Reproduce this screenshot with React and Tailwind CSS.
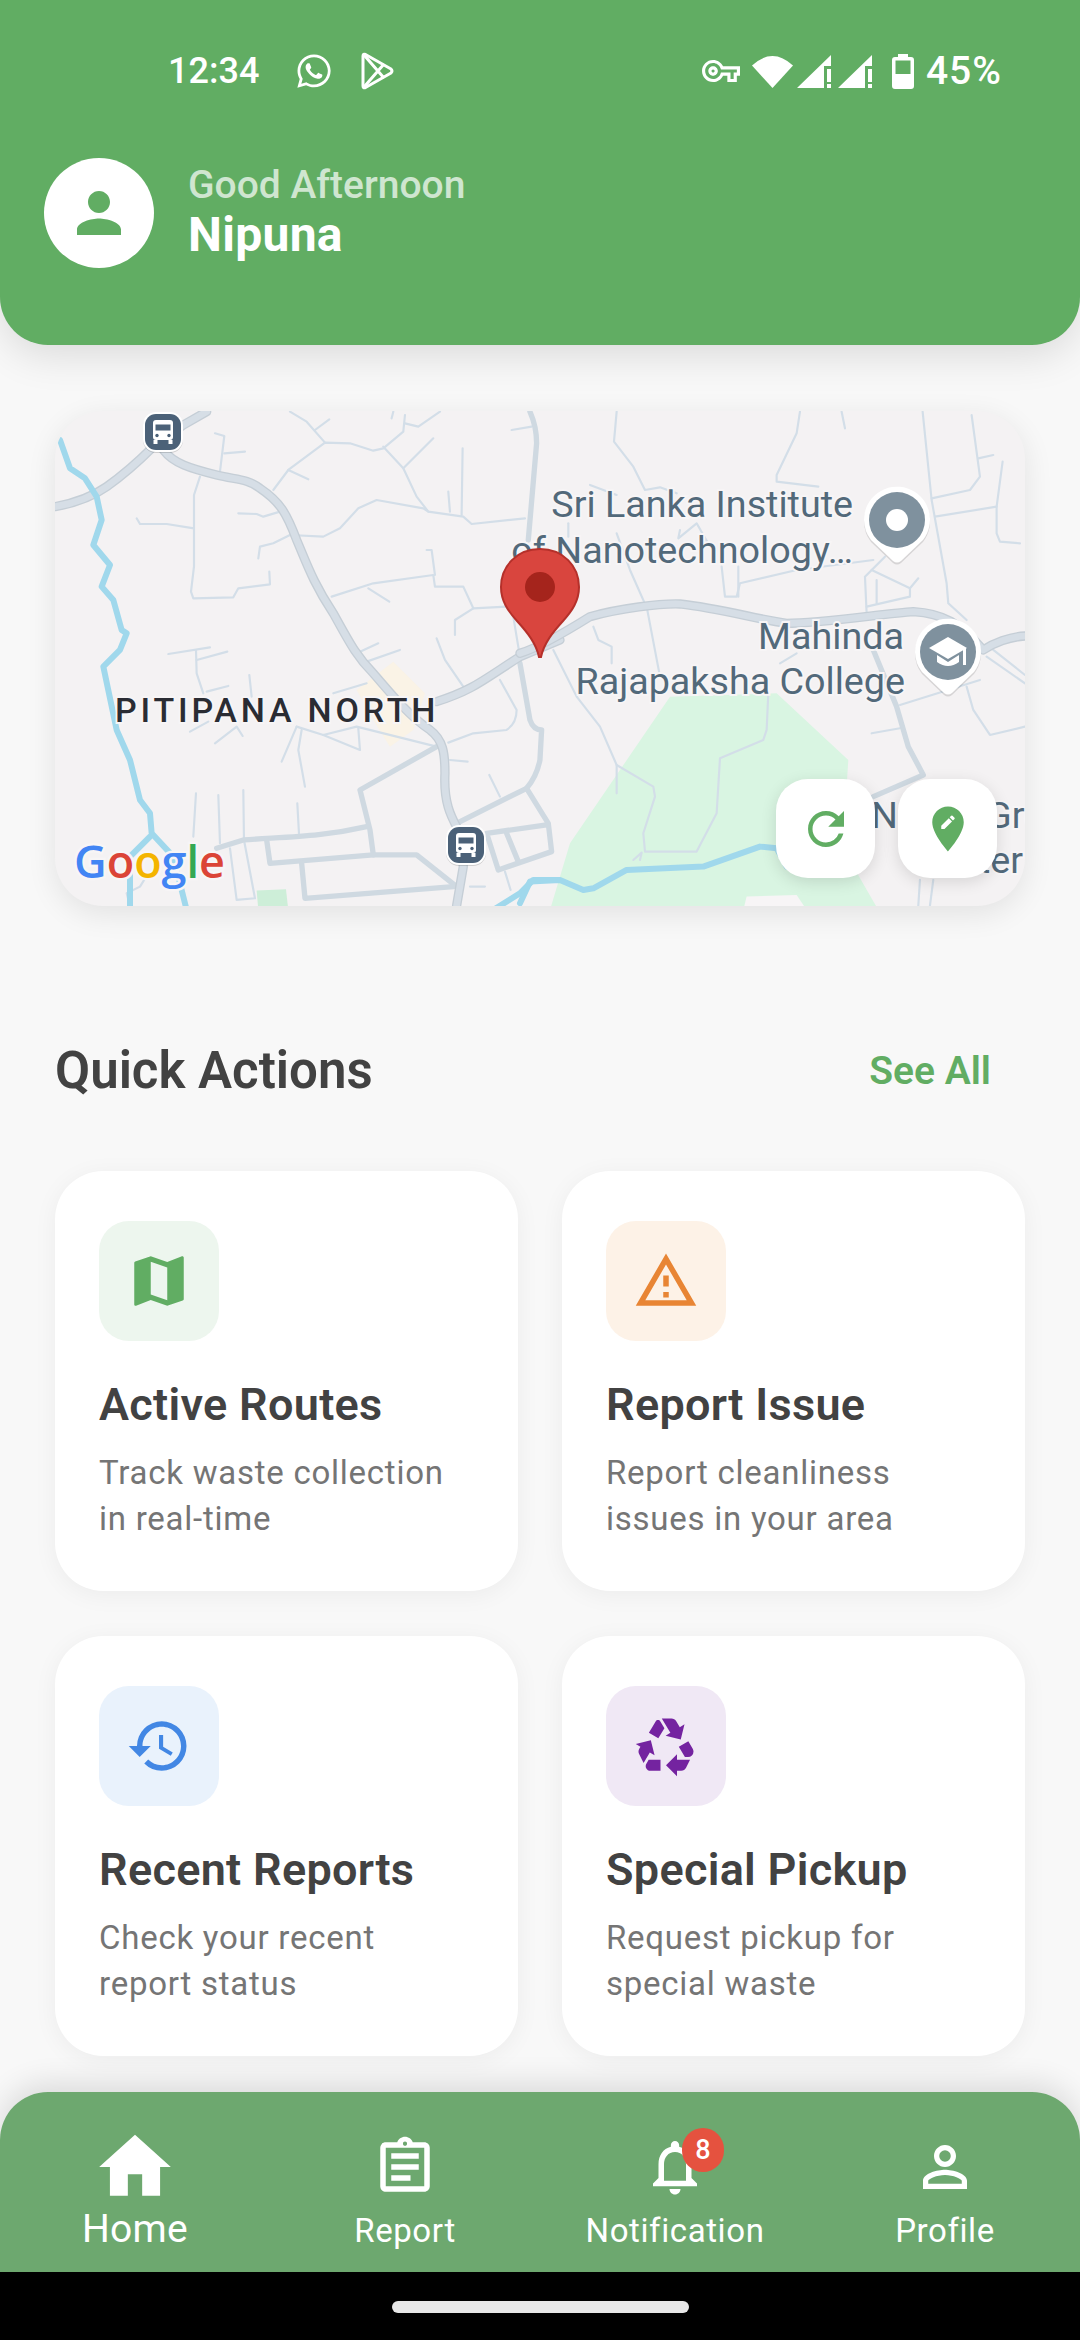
import React from "react";
import {
  MdPerson,
  MdRefresh,
  MdEditLocation,
  MdMap,
  MdOutlineWarningAmber,
  MdHistory,
  MdRecycling,
  MdHome,
  MdOutlineAssignment,
  MdNotificationsNone,
  MdPersonOutline,
  MdOutlineVpnKey,
} from "react-icons/md";
import { FaWhatsapp } from "react-icons/fa";

const leftMain = [
  "M45 320C100 310 150 295 200 260C250 225 300 180 340 140L430 75L500 35",
  "M370 150C400 190 450 205 530 225C590 240 620 235 660 265C720 305 740 340 770 420C800 490 820 550 880 640C930 730 950 770 1000 820C1060 890 1110 950 1170 990C1210 1020 1215 1060 1215 1120C1210 1220 1240 1260 1260 1300L1270 1400L1250 1517",
  "M1190 905C1300 870 1330 840 1440 770L1560 720",
];
const leftMedium = [
  "M1190 1040L960 1170L990 1290L1000 1365L1130 1365L1250 1460",
  "M980 1280C850 1310 750 1310 610 1320L530 1345",
  "M680 1320L690 1390L1000 1365",
  "M785 1390L795 1495L1240 1460",
  "M1440 790L1470 960Q1480 990 1505 990L1500 1080Q1490 1130 1460 1165L1250 1270",
  "M1460 1165L1525 1270L1535 1355L1375 1410L1340 1300L1520 1275",
  "M1400 1300L1435 1385",
  "M1470 35Q1490 80 1490 130L1465 420",
];
const leftMinor = [
  "M525 100L553 108L540 215",
  "M553 160L615 155",
  "M480 230L462 285L462 500L453 575L460 595L580 592L595 565L690 553L688 515",
  "M290 355L300 372L380 372L462 385",
  "M595 340L650 342L670 350L720 335",
  "M655 475L660 440L700 430L750 405L850 410L900 385L955 325L1010 300L1150 325L1165 335L1270 350L1295 372L1455 355",
  "M700 270L745 210L855 128L930 130L1000 152L1030 145L1090 95L1095 45",
  "M750 35L800 65L855 128",
  "M825 90L868 58",
  "M745 210L805 238",
  "M1030 140L1090 205L1130 290L1165 335",
  "M1090 205L1180 115",
  "M1268 145L1265 345",
  "M1225 275L1230 335",
  "M1095 70L1135 80L1200 35",
  "M1060 35L1055 55",
  "M1415 90L1475 80",
  "M875 590L1000 550L1180 525L1185 560L1270 560L1300 625L1400 620",
  "M985 565L1048 605",
  "M1160 450L1175 450L1185 525",
  "M1245 705L1245 660L1300 625",
  "M1190 715L1215 780L1270 860",
  "M960 755L1015 730",
  "M980 785L1080 750",
  "M385 762L510 742",
  "M468 750L470 820L490 880",
  "M470 780L562 755",
  "M500 875L565 858",
  "M628 825L635 890",
  "M880 880L980 850",
  "M450 995L505 965",
  "M525 1030L590 980L608 1008",
  "M770 980L725 1085",
  "M785 990L775 1050L795 1160",
  "M770 980L850 1005L950 980L1190 1040",
  "M850 1005L960 1050L955 985",
  "M1230 1080L1283 1085",
  "M1348 1125L1380 1190",
  "M1225 1028L1300 1000L1400 990Q1430 970 1430 930L1380 840",
  "M1420 650L1440 770",
  "M468 1180L460 1310",
  "M535 1185L540 1330",
  "M610 1170L612 1320L645 1495L590 1500L570 1345",
  "M772 1210L777 1300",
  "M1395 1415L1412 1470",
  "M1290 1460L1335 1460",
  "M270 1517L260 1480L300 1460L325 1420",
];
const rightMain = [
  "M0 760C50 745 130 700 210 650C300 625 420 610 480 612C600 625 720 660 800 670C900 670 1100 640 1180 635C1270 640 1320 670 1390 750C1420 730 1470 710 1515 708",
];
const rightMinor = [
  "M290 35L282 125L340 200L375 270L420 262L470 280",
  "M210 255L290 285",
  "M840 35L830 100L770 225L770 245L895 260",
  "M965 35L975 85",
  "M1208 35L1235 300L1280 550L1285 610L1340 660",
  "M1235 295L1350 270L1380 230L1355 45",
  "M1245 350L1430 320L1430 400L1440 425L1500 430",
  "M1375 175L1420 165",
  "M1448 185L1430 320",
  "M380 620L420 830",
  "M220 680L235 720L275 740L275 790",
  "M290 400L330 510L372 605",
  "M480 390L475 415L530 370L570 440",
  "M605 500L615 590L650 590L660 550L830 510L1060 480",
  "M655 500L655 590",
  "M145 370L145 410",
  "M1095 470L1035 530L1040 640",
  "M1055 510L1170 565L1170 590L1040 620",
  "M1070 540L1070 610",
  "M1170 565L1195 535",
  "M1340 860L1360 930L1410 1005L1515 980",
  "M1055 1000L1140 985",
  "M1140 915L1380 840",
  "M1400 770L1515 850",
  "M1420 750L1515 825",
  "M780 790L830 760",
  "M100 750L170 890L240 980L290 1095L400 1160L405 1190L370 1300L375 1355L530 1355L590 1240L600 1075L730 1020L740 990L745 880",
  "M290 1095L290 1180",
  "M1195 1517L1200 1440",
  "M1230 1517L1240 1440",
  "M360 1380L365 1358L340 1380",
];
const rightMedium = ["M1060 750L1130 920L1165 1040L1210 1125L1060 1190"];

const BusStop = ({ x, y }) => (
  <g transform={`translate(${x} ${y})`}>
    <rect x="-20" y="-19" width="40" height="40" rx="13" fill="#000" opacity="0.15" />
    <rect x="-20" y="-20" width="40" height="40" rx="13" fill="#fff" />
    <rect x="-18" y="-18" width="36" height="36" rx="11" fill="#4b6178" />
    <rect x="-10" y="-12" width="20" height="20" rx="3" fill="#fff" />
    <rect x="-7.5" y="-7.5" width="15" height="6" fill="#4b6178" />
    <circle cx="-6" cy="3.5" r="1.7" fill="#4b6178" />
    <circle cx="6" cy="3.5" r="1.7" fill="#4b6178" />
    <rect x="-9.5" y="8" width="4" height="4" fill="#fff" />
    <rect x="5.5" y="8" width="4" height="4" fill="#fff" />
  </g>
);

const PlacePin = ({ x, y, children }) => (
  <g transform={`translate(${x} ${y})`}>
    <path d="M-33 0A33 33 0 1 1 26 20L4 41Q0 44 -4 41L-26 20A33 33 0 0 1 -33 0Z" fill="#000" opacity="0.12" transform="translate(0 2)" />
    <path d="M-33 0A33 33 0 1 1 26 20L4 41Q0 44 -4 41L-26 20A33 33 0 0 1 -33 0Z" fill="#fff" />
    <circle r="28" fill="#7f919e" />
    {children}
  </g>
);

const MapLabel = ({ x, y, anchor = "start", children }) => (
  <text
    x={x}
    y={y}
    textAnchor={anchor}
    fontFamily="Roboto, sans-serif"
    fontSize="37.7"
    fill="#52697a"
    stroke="#f7f5f6"
    strokeWidth="4"
    paintOrder="stroke"
  >
    {children}
  </text>
);

const MapView = () => (
  <div className="relative h-[495px] rounded-[48px] overflow-hidden bg-[#f4f2f3] shadow-[0_8px_30px_rgba(0,0,0,0.09)]">
    <svg viewBox="0 0 970 495" className="absolute inset-0 w-full h-full">
      <g transform="translate(-15 -11) scale(0.3333)" fill="none" strokeLinecap="round" strokeLinejoin="round">
        <path d="M950 870L1060 785L1155 880L1120 990L1050 1040L1000 960Z" fill="#faf3e6" />
        <path d="M650 1472L738 1468L745 1530L655 1530Z" fill="#cdeed8" />
        {leftMinor.map((d) => (
          <path key={d} d={d} stroke="#d3dee8" strokeWidth="6.5" />
        ))}
        {leftMedium.map((d) => (
          <path key={d} d={d} stroke="#cfd9e1" strokeWidth="16" />
        ))}
        {leftMain.map((d) => (
          <g key={d}>
            <path d={d} stroke="#c5ced6" strokeWidth="28" />
            <path d={d} stroke="#d6dee6" strokeWidth="20" />
          </g>
        ))}
        <path
          d="M60 120L90 205L135 235L170 290L185 360L160 435L210 495L185 560L220 600L245 690L260 700L240 750L190 800L230 990L270 1080L300 1200L330 1240L335 1300L400 1370L440 1530M330 1310L270 1370L270 1530M1360 1530L1440 1480L1480 1440L1560 1440"
          stroke="#a0d8ec"
          strokeWidth="18"
        />
      </g>
      <g transform="translate(465 -11) scale(0.3333)" fill="none" strokeLinecap="round" strokeLinejoin="round">
        <path d="M90 1530L150 1330L450 890L770 880L985 1080L980 1160L1000 1400L1075 1530Z" fill="#d9f5e2" />
        <path d="M670 1530L680 1490L830 1485L860 1530Z" fill="#f7f5f6" />
        {rightMinor.map((d) => (
          <path key={d} d={d} stroke="#d3dee8" strokeWidth="6.5" />
        ))}
        {rightMedium.map((d) => (
          <path key={d} d={d} stroke="#cfd9e1" strokeWidth="16" />
        ))}
        {rightMain.map((d) => (
          <g key={d}>
            <path d={d} stroke="#c5ced6" strokeWidth="28" />
            <path d={d} stroke="#d6dee6" strokeWidth="20" />
          </g>
        ))}
        <path
          d="M0 1510L30 1445L120 1440L190 1470L220 1465L320 1410L550 1400L720 1340L770 1345L800 1400"
          stroke="#a0d8ec"
          strokeWidth="18"
        />
      </g>

      <text
        x="60"
        y="311"
        fontFamily="Roboto, sans-serif"
        fontWeight="500"
        fontSize="34"
        letterSpacing="3.8"
        fill="#2a2c33"
        stroke="#f7f5f6"
        strokeWidth="4"
        paintOrder="stroke"
      >
        PITIPANA NORTH
      </text>
      <MapLabel x="798" y="106" anchor="end">Sri Lanka Institute</MapLabel>
      <MapLabel x="798" y="152" anchor="end">of Nanotechnology…</MapLabel>
      <MapLabel x="849" y="238" anchor="end">Mahinda</MapLabel>
      <MapLabel x="850" y="283" anchor="end">Rajapaksha College</MapLabel>
      <MapLabel x="816" y="417">NSBM Green</MapLabel>
      <MapLabel x="968" y="462" anchor="end">Center</MapLabel>

      <g fontFamily="'Open Sans', sans-serif" fontWeight="600" fontSize="45" stroke="#f7f5f6" strokeWidth="5" paintOrder="stroke">
        <text x="19" y="467">
          <tspan fill="#4285f4">G</tspan>
          <tspan fill="#db4437">o</tspan>
          <tspan fill="#f4b400">o</tspan>
          <tspan fill="#4285f4">g</tspan>
          <tspan fill="#34a853">l</tspan>
          <tspan fill="#db4437">e</tspan>
        </text>
      </g>

      <BusStop x={108} y={21} />
      <BusStop x={411} y={434} />

      <PlacePin x={842} y={109}>
        <circle r="11" fill="#fff" />
      </PlacePin>
      <PlacePin x={893} y={241}>
        <path d="M0 -15L19 -4L0 7L-19 -4Z" fill="#fff" />
        <path d="M-11 3V10Q0 18 11 10V3L0 10Z" fill="#fff" />
        <rect x="15" y="-4" width="3" height="17" fill="#fff" />
      </PlacePin>

      <path
        d="M485 138C462 138 446 155 446 176C446 190 453 200 462 210C472 221 481 232 484 246H486C489 232 498 221 508 210C517 200 524 190 524 176C524 155 508 138 485 138Z"
        fill="#d9453e"
        stroke="#b5302a"
        strokeWidth="2"
      />
      <circle cx="485" cy="176" r="15" fill="#a5241c" />
    </svg>
    <div className="absolute right-7 bottom-7 flex gap-[23px]">
      <button className="w-[99px] h-[99px] rounded-[32px] bg-white flex items-center justify-center shadow-[0_4px_16px_rgba(0,0,0,0.12)]">
        <MdRefresh size={54} color="#61ad63" />
      </button>
      <button className="w-[99px] h-[99px] rounded-[32px] bg-white flex items-center justify-center shadow-[0_4px_16px_rgba(0,0,0,0.12)]">
        <MdEditLocation size={54} color="#61ad63" />
      </button>
    </div>
  </div>
);

const actions = [
  { title: "Active Routes", line1: "Track waste collection", line2: "in real-time", Icon: MdMap, color: "#61ad63", box: "bg-[#edf6ee]" },
  { title: "Report Issue", line1: "Report cleanliness", line2: "issues in your area", Icon: MdOutlineWarningAmber, color: "#e88534", box: "bg-[#fdf2e7]" },
  { title: "Recent Reports", line1: "Check your recent", line2: "report status", Icon: MdHistory, color: "#4287e4", box: "bg-[#e9f2fc]" },
  { title: "Special Pickup", line1: "Request pickup for", line2: "special waste", Icon: MdRecycling, color: "#7423a0", box: "bg-[#f0e8f5]" },
];

const ActionCard = ({ title, line1, line2, Icon, color, box }) => (
  <div className="h-[420px] rounded-[48px] bg-white px-11 pt-[50px] shadow-[0_4px_24px_rgba(0,0,0,0.05)]">
    <div className={`w-[120px] h-[120px] rounded-[30px] flex items-center justify-center ${box}`}>
      <Icon size={66} color={color} />
    </div>
    <h3 className="mt-[38px] text-[45px] leading-[52px] tracking-[0.3px] font-semibold text-[#424242]">{title}</h3>
    <p className="mt-[19px] text-[33px] leading-[46px] tracking-[0.75px] text-[#757575]">
      {line1}
      <br />
      {line2}
    </p>
  </div>
);

const PlayIcon = () => (
  <svg width="34" height="38" viewBox="0 0 34 38" fill="none" stroke="#fff" strokeWidth="3" strokeLinejoin="round" className="ml-[27px]">
    <path d="M3 4Q3 1.500 5.500 2.500L31 17Q33 19 31 21L5.500 35.500Q3 36.500 3 34Z" />
    <path d="M4 3L24 26M4 35L24 12" />
  </svg>
);

const WifiIcon = () => (
  <svg width="41" height="34" viewBox="0 0 41 34" fill="#fff" className="ml-[12px]">
    <path d="M0 11.500Q20.500 -7.500 41 11.500L20.500 34Z" />
  </svg>
);

const SignalIcon = ({ className }) => (
  <svg width="35" height="33" viewBox="0 0 35 33" fill="#fff" className={className}>
    <path d="M0 33L34 0V11H27V33Z" />
    <path d="M30 14H34V27H30ZM30 29H34V33H30Z" />
  </svg>
);

const BatteryIcon = () => (
  <svg width="22" height="35" viewBox="0 0 22 35" fill="#fff" fillRule="evenodd" className="ml-[19px]">
    <path d="M6 0H16V3H19Q22 3 22 6V32Q22 35 19 35H3Q0 35 0 32V6Q0 3 3 3H6ZM3.500 6.500V20H18.500V6.500Z" />
  </svg>
);

const NavItem = ({ Icon, label, size = 66, active, badge }) => (
  <div className={`flex flex-col items-center text-white ${active ? "pt-[32px]" : "pt-[42px]"}`}>
    <div className="relative">
      <Icon size={size} color="#fff" />
      {badge && (
        <span className="absolute left-[40px] top-[-6px] w-[42px] h-[44px] rounded-full bg-[#e5523f] flex items-center justify-center text-[27px] font-medium">
          {badge}
        </span>
      )}
    </div>
    <span className={active ? "-mt-[4px] text-[39px] leading-[46px] tracking-[0.3px]" : "mt-[9px] text-[33px] leading-[44px] tracking-[0.6px]"}>
      {label}
    </span>
  </div>
);

const App = () => {
  return (
    <div className="relative w-[1080px] h-[2340px] overflow-hidden flex flex-col bg-[#f8f8f8] font-[Roboto,sans-serif]">
      <header className="relative z-10 h-[345px] shrink-0 bg-[#61ad63] rounded-b-[48px] shadow-[0_10px_40px_rgba(0,0,0,0.12)] text-white">
        <div className="flex items-center h-[38px] mt-[52px] pl-[168px] pr-[78px]">
          <span className="text-[36px] font-medium leading-[38px]">12:34</span>
          <FaWhatsapp size={38} className="ml-[36px]" />
          <PlayIcon />
          <MdOutlineVpnKey size={38} className="ml-auto" />
          <WifiIcon />
          <SignalIcon className="ml-[4px]" />
          <SignalIcon className="ml-[6px]" />
          <BatteryIcon />
          <span className="ml-[12px] text-[39px] font-medium leading-[38px] tracking-[1px]">45%</span>
        </div>
        <div className="flex items-center mt-[68px] pl-[44px]">
          <div className="w-[110px] h-[110px] rounded-full bg-white flex items-center justify-center">
            <MdPerson size={66} color="#61ad63" />
          </div>
          <div className="ml-[34px]">
            <p className="text-[39px] leading-[44px] font-medium text-[#cfe6d0]">Good Afternoon</p>
            <p className="text-[48px] leading-[56px] font-bold tracking-[0.3px]">Nipuna</p>
          </div>
        </div>
      </header>

      <main className="flex-1 px-[55px] pt-[66px]">
        <MapView />
        <div className="flex items-center justify-between pr-[34px] mt-[137px] mb-[72px] h-[56px]">
          <h2 className="text-[51px] font-semibold text-[#424242]">Quick Actions</h2>
          <span className="text-[39px] font-semibold text-[#61ad63]">See All</span>
        </div>
        <div className="grid grid-cols-2 gap-x-[44px] gap-y-[45px]">
          {actions.map((a) => (
            <ActionCard key={a.title} {...a} />
          ))}
        </div>
      </main>

      <nav className="relative z-10 h-[180px] shrink-0 grid grid-cols-4 bg-[#6da86f] rounded-t-[48px] shadow-[0_-8px_30px_rgba(0,0,0,0.12)]">
        <NavItem Icon={MdHome} label="Home" size={86} active />
        <NavItem Icon={MdOutlineAssignment} label="Report" />
        <NavItem Icon={MdNotificationsNone} label="Notification" badge="8" />
        <NavItem Icon={MdPersonOutline} label="Profile" />
      </nav>
      <div className="relative z-10 h-[68px] shrink-0 bg-black flex justify-center pt-[29px]">
        <div className="w-[297px] h-[12px] rounded-full bg-[#e8e8e8]" />
      </div>
    </div>
  );
};

export default App;
